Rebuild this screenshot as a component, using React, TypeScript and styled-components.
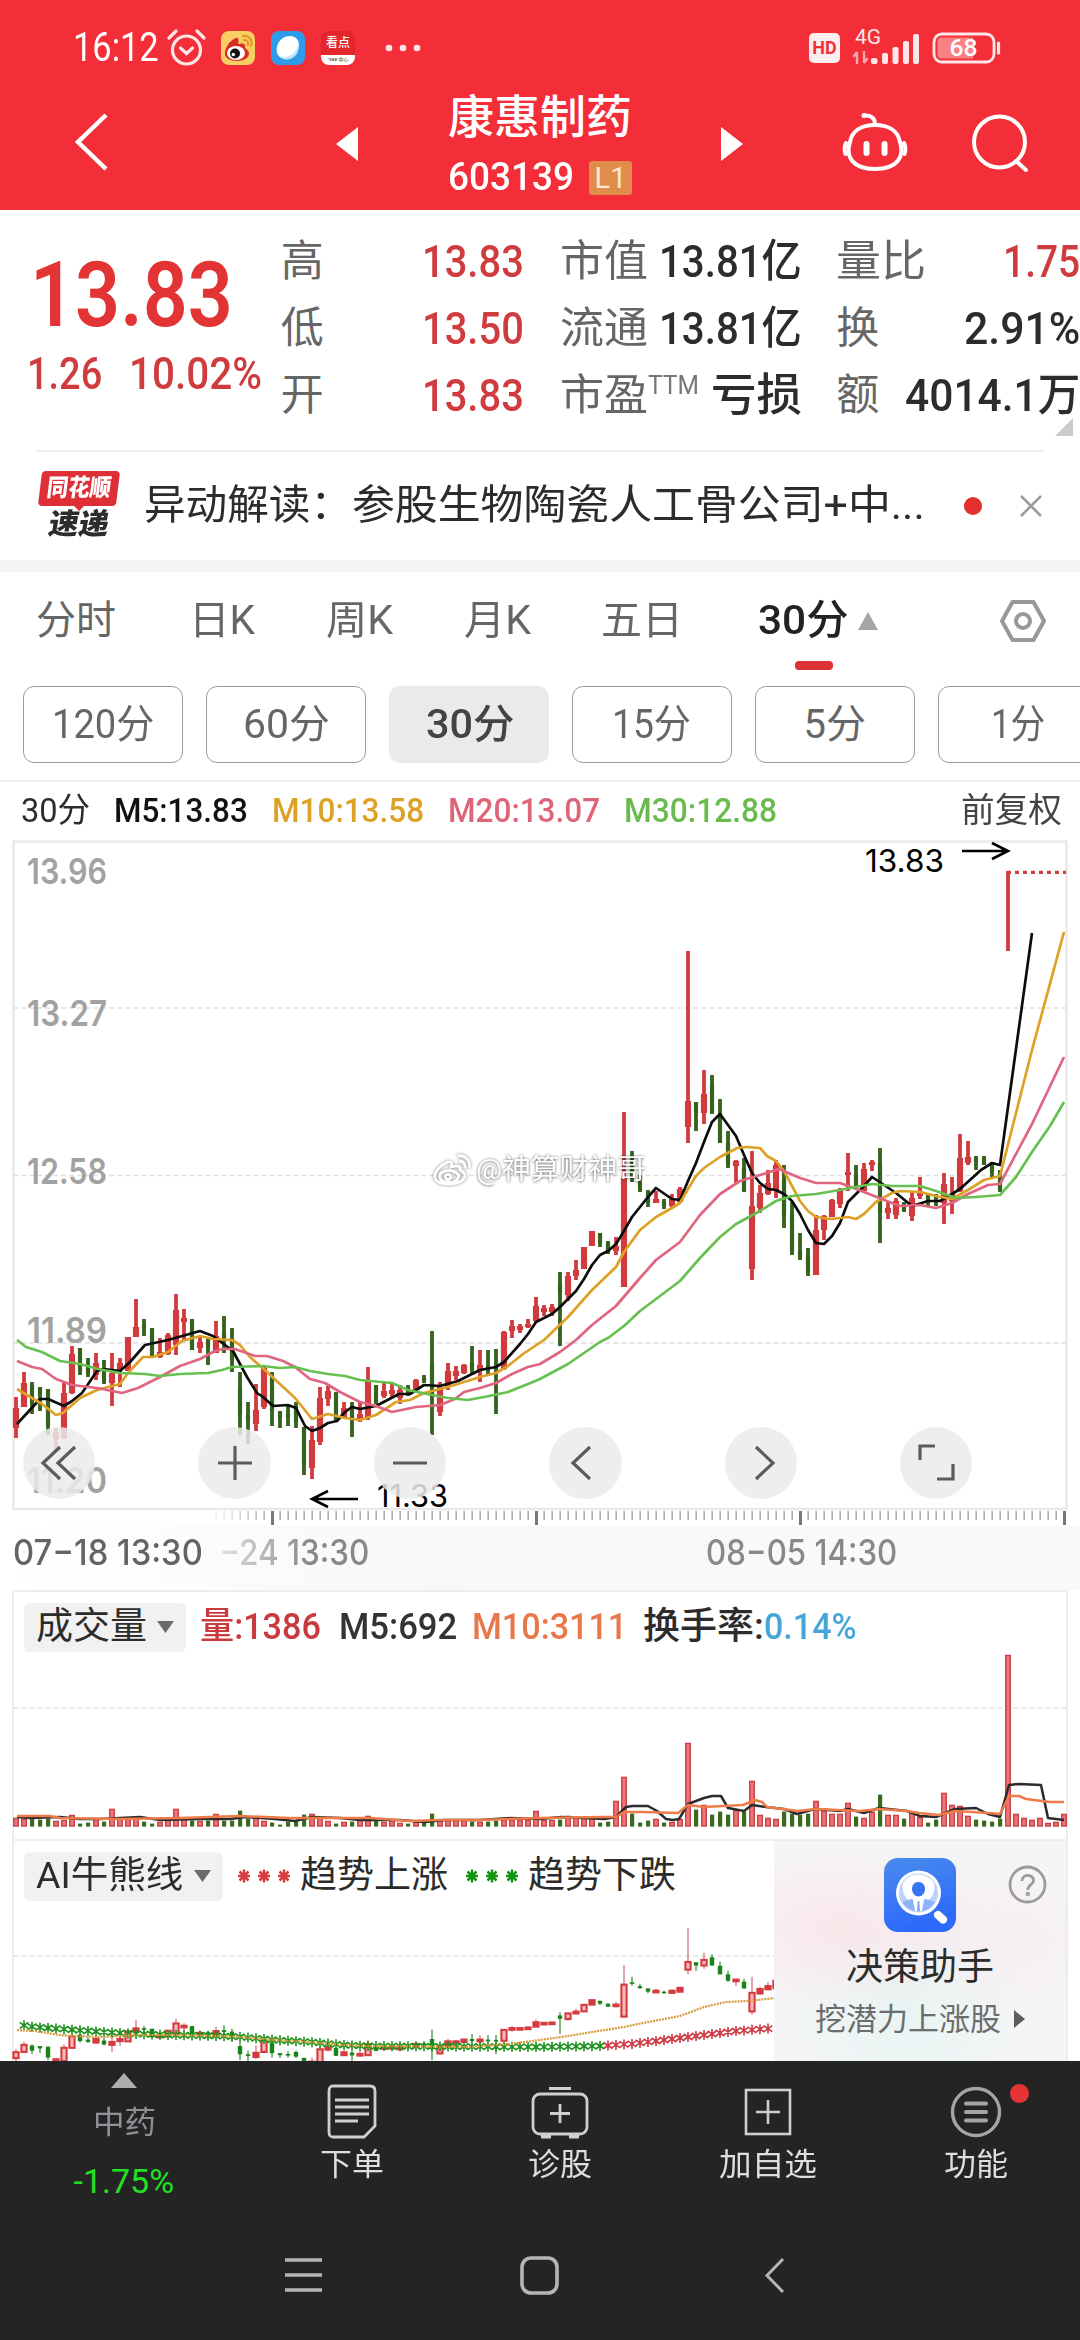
import React, { useLayoutEffect, useRef, useState } from 'react';
import styled, { createGlobalStyle, css } from 'styled-components';

const Global = createGlobalStyle`
  * { box-sizing: border-box; }
  html, body { margin: 0; padding: 0; background: #fff; }
  body { font-family: Roboto, "Noto Sans CJK SC", sans-serif; line-height: 1; overflow: hidden; }
  svg { display: block; flex: none; overflow: visible; }
`;

const INK = '#2c2c2c';

/* ---------- fitted text ---------- */

const FitBox = styled.span<{ $w: number; $size: number; $color?: string; $weight?: number; $gap?: number; $face?: string }>`
  display: block;
  flex: none;
  width: ${p => p.$w}px;
  margin-left: ${p => p.$gap ?? 0}px;
  font-size: ${p => p.$size}px;
  line-height: 1.15;
  color: ${p => p.$color ?? 'inherit'};
  font-weight: ${p => p.$weight ?? 400};
  ${p => p.$face && css`font-family: ${p.$face}, "Noto Sans CJK SC", sans-serif;`}
  white-space: pre;
`;
const FitInner = styled.span`
  display: inline-block;
  transform-origin: 0 50%;
`;

type FitProps = { w: number; size: number; color?: string; weight?: number; gap?: number; face?: string; children: React.ReactNode };

function Fit({ w, size, color, weight, gap, face, children }: FitProps) {
  const ref = useRef<HTMLSpanElement>(null);
  const [k, setK] = useState(1);
  useLayoutEffect(() => {
    if (ref.current) setK(w / ref.current.offsetWidth);
  }, [w, size]);
  return (
    <FitBox $w={w} $size={size} $color={color} $weight={weight} $gap={gap} $face={face}>
      <FitInner ref={ref} style={{ transform: `scaleX(${k})` }}>{children}</FitInner>
    </FitBox>
  );
}

/* ---------- page ---------- */

const Page = styled.div`
  width: 1080px;
  height: 2340px;
  overflow: hidden;
  display: flex;
  flex-direction: column;
  background: #fff;
  color: ${INK};
`;
const Header = styled.header`
  height: 210px;
  flex: none;
  background: #f32e38;
  color: #fff;
  display: flex;
  flex-direction: column;
`;
const StatusBar = styled.div`
  height: 96px;
  padding: 0 78px 0 73px;
  display: flex;
  align-items: center;
`;
const Gap = styled.i<{ $w: number }>`width: ${p => p.$w}px; flex: none;`;
const Grow = styled.i`flex: 1;`;
const AppTile = styled.div<{ $bg: string }>`
  width: 34px;
  height: 34px;
  border-radius: 8px;
  overflow: hidden;
  background: ${p => p.$bg};
  display: flex;
  flex-direction: column;
  align-items: center;
  justify-content: center;
`;
const TileText = styled.span`
  font-size: 12px;
  line-height: 24px;
  font-weight: 500;
  color: #fff;
`;
const TileFoot = styled.span`
  width: 34px;
  height: 10px;
  background: #fff;
  color: #444;
  font-size: 5px;
  line-height: 9px;
  text-align: center;
`;
const HdBadge = styled.div`
  width: 31px;
  height: 30px;
  border-radius: 5px;
  background: #fdeef0;
  color: #f32e38;
  font-size: 18px;
  font-weight: 700;
  line-height: 30px;
  text-align: center;
`;
const TitleBar = styled.div`
  height: 114px;
  padding: 0 50px 0 75px;
  display: flex;
  align-items: flex-start;
`;
const Slot = styled.div<{ $top: number; $ml: number }>`
  padding-top: ${p => p.$top}px;
  margin-left: ${p => p.$ml}px;
`;
const TitleStack = styled.div`
  width: 184px;
  margin-left: 90px;
  margin-top: -5px;
`;
const CodeRow = styled.div`
  margin-top: 17px;
  height: 34px;
  display: flex;
  align-items: center;
  justify-content: space-between;
`;
const LevelBadge = styled.div`
  width: 43px;
  height: 34px;
  border-radius: 3px;
  background: #e18d4a;
  color: #fce9cf;
  font-size: 29px;
  line-height: 35px;
  text-align: center;
`;

/* ---------- quote ---------- */

const Quote = styled.section`
  height: 240px;
  flex: none;
  padding-top: 18px;
  display: flex;
`;
const PriceBlock = styled.div`
  width: 281px;
  padding: 15px 0 0 30px;
`;
const ChangeRow = styled.div`
  display: flex;
  margin: 0 0 0 -3px;
`;
const Column = styled.div<{ $w: number; $ml: number }>`
  width: ${p => p.$w}px;
  margin-left: ${p => p.$ml}px;
`;
const Cell = styled.div`
  height: 67px;
  display: flex;
  align-items: center;
  justify-content: space-between;
`;
const LabelPair = styled.div`display: flex;`;
const Corner = styled.div`
  height: 14px;
  display: flex;
  justify-content: flex-end;
  padding-right: 7px;
  margin-top: -11px;
`;
const Rule = styled.div`
  height: 2px;
  flex: none;
  margin: 0 36px;
  background: #efefef;
`;
const News = styled.section`
  height: 108px;
  flex: none;
  padding: 0 37px;
  display: flex;
  align-items: center;
`;
const Logo = styled.div`
  width: 84px;
  margin-right: 24px;
  display: flex;
  flex-direction: column;
  align-items: center;
`;
const LogoTop = styled.div`
  width: 78px;
  height: 35px;
  background: #dd2f35;
  border-radius: 4px;
  transform: skewX(-7deg);
  display: flex;
  align-items: center;
  justify-content: center;
  color: #fff;
`;
const LogoTip = styled.div`
  width: 0;
  border: 5px solid transparent;
  border-top-color: #dd2f35;
  border-bottom: 0;
`;
const LogoBottom = styled.div`
  transform: skewX(-10deg);
  margin-top: -3px;
`;
const RedDot = styled.i<{ $ml: number }>`
  width: 18px;
  height: 18px;
  border-radius: 50%;
  margin-left: ${p => p.$ml}px;
  background: #e53030;
`;
const Band = styled.div`height: 12px; flex: none; background: #f5f5f5;`;

/* ---------- tabs ---------- */

const Tabs = styled.nav`
  height: 98px;
  flex: none;
  padding-left: 36px;
  display: flex;
  align-items: center;
  color: #666;
`;
const ActiveBar = styled.div`
  height: 17px;
  flex: none;
  padding-left: 795px;
  margin-top: -9px;
  &::before { content: ''; display: block; width: 38px; height: 9px; border-radius: 4px; background: #dd3235; }
`;
const Chips = styled.div`
  height: 77px;
  flex: none;
  margin-top: 8px;
  padding-left: 22.500px;
  display: flex;
  gap: 23px;
`;
const Chip = styled.button<{ $on?: boolean }>`
  width: 160px;
  height: 77px;
  flex: none;
  padding: 0;
  border: 1.500px solid ${p => (p.$on ? '#eaeaea' : '#9c9c9c')};
  border-radius: 11px;
  background: ${p => (p.$on ? '#eaeaea' : '#fff')};
  color: ${p => (p.$on ? '#444' : '#666')};
  font-family: inherit;
  display: flex;
  align-items: center;
  justify-content: center;
`;
const Legend = styled.div`
  height: 60px;
  flex: none;
  margin-top: 17px;
  border-top: 2px solid #ececec;
  padding-left: 21px;
  display: flex;
  align-items: center;
`;

/* ---------- charts ---------- */

const ChartWrap = styled.section`
  position: relative;
  height: 686px;
  flex: none;
`;
const Controls = styled.div`
  position: absolute;
  left: 23px;
  top: 587px;
  display: flex;
  gap: 103px;
`;
const RoundButton = styled.button`
  width: 72.4px;
  height: 72.4px;
  border: 0;
  padding: 0;
  border-radius: 50%;
  background: rgba(235, 235, 235, 0.85);
  display: flex;
  align-items: center;
  justify-content: center;
`;
const Watermark = styled.div`
  position: absolute;
  left: 432px;
  top: 313px;
  display: flex;
  align-items: center;
  color: #fff;
  text-shadow: 0 0 3px rgba(0, 0, 0, 0.45), 0 1px 3px rgba(0, 0, 0, 0.3);
`;
const Dates = styled.div`
  height: 64px;
  flex: none;
  padding: 0 0 12px 13px;
  background: linear-gradient(90deg, #fff 0, #f8f8f8 40%, #fafafa 100%);
  display: flex;
  align-items: center;
`;
const Faded = styled.div`
  margin-left: 16px;
  mask-image: linear-gradient(90deg, rgba(0,0,0,.2), #000 60%);
`;
const Panel = styled.section<{ $h: number }>`
  height: ${p => p.$h}px;
  flex: none;
  margin: 0 12px;
  border: 2px solid #ededed;
  border-bottom: 0;
  display: flex;
`;
const PanelMain = styled.div`flex: none; width: 1051px; margin-left: -14px;`;
const AiMain = styled.div`flex: none; width: 774px; margin-left: -14px; overflow: hidden;`;
const PanelHead = styled.div`
  height: 70px;
  padding: 0 0 0 24px;
  display: flex;
  align-items: center;
`;
const Picker = styled.div<{ $w: number }>`
  width: ${p => p.$w}px;
  height: 49px;
  flex: none;
  border-radius: 6px;
  background: #f1f1f1;
  padding: 0 12px;
  display: flex;
  align-items: center;
  justify-content: space-between;
`;
const AiCard = styled.aside`
  flex: 1;
  background:
    radial-gradient(ellipse at 22% 40%, rgba(252, 226, 230, .75), transparent 45%),
    radial-gradient(ellipse at 75% 45%, rgba(250, 232, 236, .5), transparent 50%),
    radial-gradient(ellipse at 45% 75%, rgba(228, 244, 242, .8), transparent 55%),
    #f5f5f7;
  display: grid;
  grid-template-columns: 1fr 74px 1fr;
  justify-items: center;
  align-content: start;
`;
const CardIcon = styled.div`grid-column: 2; padding-top: 16px;`;
const CardHelp = styled.div`grid-column: 3; padding: 24px 0 0 32px;`;
const CardTitle = styled.div`grid-column: 1 / -1; margin-top: 14px;`;
const CardLink = styled.div`
  grid-column: 1 / -1;
  margin-top: 12px;
  display: flex;
  align-items: center;
`;

/* ---------- bottom ---------- */

const Bottom = styled.footer`
  height: 279px;
  flex: none;
  background: #242424;
  color: #dedede;
`;
const Actions = styled.div`
  height: 150px;
  display: flex;
`;
const Action = styled.div<{ $ml: number; $w: number }>`
  width: ${p => p.$w}px;
  margin-left: ${p => p.$ml}px;
  position: relative;
  display: flex;
  flex-direction: column;
  align-items: center;
`;
const IconSlot = styled.div`
  height: 82px;
  margin-bottom: 4px;
  padding-top: 20px;
  display: flex;
  align-items: center;
`;
const Badge = styled.i`
  position: absolute;
  right: -1px;
  top: 23px;
  width: 19px;
  height: 19px;
  border-radius: 50%;
  background: #e63333;
`;
const Industry = styled.div`
  width: 110px;
  margin-left: 69px;
  padding-top: 12px;
  display: flex;
  flex-direction: column;
  align-items: center;
`;
const IndustryLine = styled.div<{ $mt: number }>`margin-top: ${p => p.$mt}px;`;
const SystemNav = styled.div`
  height: 128px;
  padding-left: 285px;
  display: flex;
  align-items: center;
`;

/* ---------- data ---------- */

// direction, then high, body top, body bottom, low
const CANDLES = `
r1397,1408,1428,1438 r1372,1383,1407,1407 g1382,1385,1403,1414 g1387,1387,1395,1411 g1389,1389,1426,1435 r1428,1432,1439,1450
r1382,1393,1438,1439 r1346,1354,1393,1394 g1348,1348,1370,1375 g1358,1365,1373,1377 r1353,1363,1375,1380 g1360,1368,1382,1384
r1353,1373,1383,1406 r1358,1363,1370,1387 r1337,1337,1371,1371 r1299,1327,1337,1337 g1319,1326,1328,1336 g1328,1328,1357,1357
r1338,1352,1357,1358 r1333,1335,1354,1355 r1294,1310,1345,1355 r1309,1318,1322,1340 g1319,1319,1350,1350 r1337,1342,1348,1353
g1338,1340,1347,1365 r1321,1336,1353,1353 g1316,1333,1339,1353 g1328,1338,1360,1372 g1372,1387,1415,1435 g1402,1415,1421,1444
r1384,1410,1424,1431 r1365,1368,1407,1409 g1372,1375,1411,1426 g1411,1411,1418,1428 g1405,1414,1417,1426 g1402,1407,1423,1428
g1427,1427,1465,1475 r1426,1440,1468,1479 r1387,1398,1442,1445 r1386,1391,1399,1406 g1392,1393,1420,1422 r1402,1408,1418,1418
g1402,1409,1419,1437 r1402,1414,1419,1422 r1367,1381,1418,1420 g1385,1385,1404,1404 r1382,1391,1396,1398 r1382,1390,1394,1398
r1385,1390,1398,1404 g1385,1387,1393,1396 r1379,1380,1390,1390 g1375,1378,1380,1383 g1331,1363,1397,1435 r1382,1387,1412,1416
r1363,1371,1387,1390 r1366,1371,1376,1380 r1364,1365,1373,1374 g1346,1363,1370,1375 r1350,1365,1371,1382 g1350,1365,1368,1375
g1349,1366,1371,1414 r1331,1332,1369,1370 r1320,1326,1331,1338 r1324,1326,1330,1333 r1319,1324,1327,1328 r1297,1306,1321,1322
r1305,1308,1312,1316 r1304,1307,1312,1316 g1272,1283,1294,1346 r1272,1276,1295,1301 r1260,1270,1276,1280 r1247,1247,1269,1269
r1231,1231,1246,1246 g1233,1233,1243,1247 g1241,1243,1253,1254 r1237,1246,1251,1255 r1112,1178,1287,1287 g1151,1170,1175,1182
g1175,1183,1190,1192 g1190,1191,1202,1207 r1191,1199,1203,1203 g1199,1202,1206,1209 r1194,1199,1206,1208 r1187,1189,1202,1203
r951,1101,1127,1143 g1102,1102,1113,1131 r1070,1094,1113,1124 g1075,1085,1113,1114 g1099,1114,1143,1143 g1131,1143,1165,1168
r1160,1161,1166,1183 g1158,1168,1191,1192 r1151,1206,1269,1280 r1185,1193,1208,1213 r1170,1183,1194,1195 r1160,1165,1190,1198
g1165,1180,1216,1228 g1202,1213,1252,1255 g1233,1251,1258,1260 g1248,1255,1271,1276 r1215,1230,1275,1275 r1215,1216,1230,1240
r1199,1200,1217,1217 r1188,1190,1204,1208 r1153,1172,1175,1191 g1165,1175,1188,1189 r1163,1169,1191,1191 r1160,1162,1165,1171
g1148,1163,1213,1243 r1201,1208,1213,1219 r1198,1201,1215,1219 g1202,1203,1211,1212 r1191,1198,1216,1221 r1177,1191,1196,1199
g1194,1195,1201,1207 g1194,1195,1202,1206 r1173,1184,1203,1224 r1177,1194,1201,1214 r1134,1158,1191,1192 r1141,1157,1163,1165
g1156,1158,1162,1170 g1156,1157,1165,1165 g1162,1164,1172,1178 g1170,1174,1190,1192 r871,951,951,951`
  .trim().split(/\s+/)
  .map((s, i) => ({ up: s[0] === 'r', x: 16 + i * 8, v: s.slice(1).split(',').map(Number) }));

const VOLUME = [8,7,8,7,8,5,6,11,3,4,7,5,17,8,7,8,5,3,4,6,17,8,6,5,6,12,6,6,16,8,8,5,4,2,5,5,12,12,8,5,3,4,5,7,10,7,4,6,3,3,4,5,13,6,6,6,6,5,4,5,6,6,6,6,6,15,
  6,6,7,10,8,8,8,4,5,25,49,13,4,6,7,4,4,7,83,17,21,12,15,12,16,15,45,11,8,7,15,13,12,13,25,15,12,12,23,10,8,14,32,11,11,8,14,9,4,7,33,21,20,10,7,6,5,8,171,12,8,6,8,3,4,12];

const MA5 = '17,1424 40,1399 48,1399 64,1406 72,1401 82,1393 97,1371 104,1369 120,1371 130,1362 145,1345 168,1340 200,1331 213,1336 233,1351 247,1377 257,1393 263,1397 273,1406 288,1405 296,1408 305,1426 312,1431 320,1428 328,1423 337,1421 345,1412 352,1407 360,1409 376,1406 399,1394 410,1394 424,1385 440,1386 458,1381 480,1370 496,1367 504,1362 520,1344 528,1334 536,1322 552,1314 560,1307 568,1299 576,1291 584,1279 592,1265 600,1255 608,1251 616,1244 624,1231 632,1217 648,1197 656,1188 672,1199 680,1200 688,1181 696,1163 704,1142 712,1122 720,1114 728,1125 736,1136 744,1155 752,1173 760,1183 768,1189 776,1190 784,1194 792,1201 800,1214 808,1230 816,1243 824,1244 832,1236 840,1223 848,1202 856,1194 864,1186 872,1177 884,1185 896,1193 912,1206 928,1201 940,1201 952,1194 960,1189 981,1170 992,1163 1000,1165 1032,933';
const MA10 = '17,1389 32,1398 42,1404 56,1415 63,1413 80,1398 97,1390 112,1386 120,1384 128,1373 143,1357 153,1357 168,1352 182,1341 200,1336 213,1339 232,1340 240,1345 250,1357 267,1372 295,1398 304,1409 312,1419 328,1414 345,1418 360,1420 376,1415 396,1402 410,1400 424,1393 448,1387 480,1377 496,1373 508,1366 523,1354 544,1340 568,1317 592,1290 616,1267 624,1252 640,1230 656,1217 672,1208 680,1203 688,1189 696,1176 704,1168 720,1157 737,1148 747,1147 760,1148 767,1156 776,1161 784,1171 792,1186 800,1201 808,1211 816,1217 832,1219 848,1217 856,1219 864,1214 876,1202 892,1193 900,1191 920,1192 936,1196 952,1199 968,1190 984,1180 1000,1176 1032,1050 1064,932';
const MA20 = '17,1361 32,1367 42,1369 56,1379 72,1385 97,1388 122,1393 138,1388 160,1377 180,1366 200,1359 215,1351 223,1349 235,1349 255,1356 267,1356 283,1361 295,1367 310,1379 325,1383 340,1392 360,1402 376,1406 392,1412 416,1407 440,1405 455,1399 464,1392 480,1388 496,1383 512,1374 528,1367 540,1364 560,1352 576,1340 592,1325 616,1306 640,1278 656,1260 680,1242 700,1215 720,1194 740,1181 760,1175 779,1169 800,1178 816,1183 840,1183 848,1186 864,1192 892,1203 900,1206 920,1205 936,1208 952,1203 968,1194 988,1185 1000,1184 1032,1124 1064,1057';
const MA30 = '17,1340 26,1347 42,1352 60,1361 80,1364 98,1369 120,1373 145,1374 160,1376 180,1374 208,1373 222,1370 232,1367 263,1366 280,1368 295,1367 310,1371 328,1374 345,1376 360,1380 392,1383 408,1390 432,1395 448,1398 468,1400 489,1396 508,1392 528,1384 540,1379 568,1364 584,1353 600,1342 608,1338 624,1326 640,1311 680,1281 700,1258 720,1237 736,1224 760,1211 776,1201 792,1196 816,1194 840,1190 856,1187 872,1184 892,1186 920,1186 936,1191 956,1198 976,1197 1000,1195 1016,1177 1032,1152 1050,1126 1064,1102';

const VMA5 = '17,1817 30,1818 60,1817 80,1819 100,1819 140,1817 160,1820 200,1819 230,1819 245,1817 275,1819 295,1821 312,1817 340,1818 360,1820 400,1820 425,1822 445,1820 480,1820 510,1818 540,1819 561,1817 605,1819 616,1817 626,1807 632,1806 648,1806 657,1811 666,1819 673,1820 679,1819 688,1804 704,1798 712,1796 721,1796 728,1808 744,1811 752,1805 766,1807 784,1809 797,1814 815,1809 840,1811 848,1809 864,1813 879,1808 907,1811 920,1816 936,1817 955,1809 976,1808 988,1814 1000,1817 1009,1785 1019,1784 1041,1785 1048,1818 1064,1820';
const VMA10 = '17,1816 50,1816 60,1818 120,1819 180,1818 240,1816 290,1818 330,1818 370,1818 410,1821 440,1820 480,1820 540,1818 602,1817 616,1817 624,1812 643,1812 678,1813 688,1805 704,1807 743,1805 755,1800 762,1802 767,1807 798,1811 816,1809 860,1811 879,1809 907,1811 919,1813 939,1815 955,1811 988,1813 1000,1814 1009,1796 1019,1796 1026,1799 1050,1802 1064,1802';

const parse = (s: string) => s.split(' ').map(p => p.split(',').map(Number));
const TREND = parse('22,2025 34,2027 62,2029 103,2032 138,2034 172,2035 220,2036 241,2037 275,2040 310,2042 344,2045 365,2046 540,2047 600,2046 631,2044 664,2040 704,2035 736,2031 776,2028');
const AI_AVG = '17,2030 34,2031 60,2035 72,2036 100,2037 138,2035 172,2035 220,2036 241,2037 275,2040 310,2042 344,2045 365,2046 470,2047 510,2044 540,2040 568,2036 592,2032 624,2027 643,2023 680,2016 704,2007 726,2002 747,2001 776,1998';

function at(line: number[][], x: number) {
  for (let i = 1; i < line.length; i++) {
    const [x0, y0] = line[i - 1];
    const [x1, y1] = line[i];
    if (x <= x1) return y0 + ((y1 - y0) * (x - x0)) / (x1 - x0);
  }
  return line[line.length - 1][1];
}
const aiY = (y: number) => Math.max(1928, 2049 + 0.294 * (y - 1397));

const C_UP = '#d13b3d';
const C_DOWN = '#35621f';

/* ---------- drawings ---------- */

function PriceChart() {
  const ticks = Array.from({ length: 107 }, (_, i) => 216 + i * 8);
  const labels: [string, number][] = [['13.96', 884], ['13.27', 1026], ['12.58', 1184], ['11.89', 1343], ['11.20', 1493]];
  return (
    <svg width="1080" height="686" viewBox="0 840 1080 686">
      <path d="M13.5 1509V841.5H1066.5V1509Z" fill="none" stroke="#e9e9e9" strokeWidth="2.5" />
      {[1008, 1175.5, 1343].map(y => (
        <path key={y} d={`M13 ${y}H1066`} stroke="#e0e0e0" strokeWidth="1.4" strokeDasharray="5 3" />
      ))}
      <g fontFamily="Inter, sans-serif" fontSize="36" fontWeight="600" fill="#a2a2a2">
        {labels.map(([t, y]) => (
          <text key={t} x="27" y={y} textLength="80" lengthAdjust="spacingAndGlyphs">{t}</text>
        ))}
      </g>
      {CANDLES.map(({ up, x, v: [h, t, b, l] }) => (
        <g key={x} fill={up ? C_UP : C_DOWN}>
          <rect x={x - 1.9} y={h} width="3.8" height={Math.max(l - h, 2)} />
          <rect x={up ? x - 3.1 : x - 2.1} y={t} width={up ? 6.2 : 4.2} height={Math.max(b - t, h === 871 ? 0 : 3)} />
        </g>
      ))}
      <path d="M1007 872.3H1066" stroke="#cf3f3f" strokeWidth="3.2" strokeDasharray="4 4" />
      <g fill="none" strokeWidth="2.7" strokeLinejoin="round">
        <polyline points={MA5} stroke="#0c0c0c" />
        <polyline points={MA10} stroke="#dda125" />
        <polyline points={MA20} stroke="#df6580" />
        <polyline points={MA30} stroke="#68c050" />
      </g>
      <g fontFamily="Inter, sans-serif" fontSize="31" fill="#000">
        <text x="865" y="872" textLength="79" lengthAdjust="spacingAndGlyphs">13.83</text>
        <text x="377" y="1507" textLength="71" lengthAdjust="spacingAndGlyphs">11.33</text>
      </g>
      <path d="M962 851H1008M992 843L1008 851L992 859" fill="none" stroke="#000" strokeWidth="2.6" />
      <path d="M358 1499H312M328 1491L312 1499L328 1507" fill="none" stroke="#000" strokeWidth="2.6" />
      {ticks.map((x, i) => {
        const major = (x - 272) % 264 === 0;
        return (
          <rect key={x} x={major ? x - 1 : x - 0.5} y="1511" width={major ? 3 : 1.3} height={major ? 14 : 9}
            fill={major ? '#777' : '#9a9a9a'} opacity={Math.min(1, 0.15 + i * 0.12)} />
        );
      })}
    </svg>
  );
}

function VolumeChart() {
  return (
    <svg width="1066" height="177" viewBox="0 1662 1066 177">
      <path d="M13 1708H1066" stroke="#e3e3e3" strokeWidth="1.6" strokeDasharray="5 3" />
      {VOLUME.map((h, i) => {
        const up = i > 123 || CANDLES[i].up;
        const x = 16 + i * 8;
        return up
          ? <rect key={i} x={x - 2.3} y={1826.4 - h} width="4.6" height={h - 0.4} fill="#ec7476" stroke="#cd4246" strokeWidth="1.4" />
          : <rect key={i} x={x - 2} y={1826.6 - h} width="4.2" height={h} fill="#3b6a1f" />;
      })}
      <g fill="none" strokeWidth="2.5" strokeLinejoin="round">
        <polyline points={VMA5} stroke="#2b2b2b" />
        <polyline points={VMA10} stroke="#ee7b48" />
      </g>
    </svg>
  );
}

function AiChart() {
  const xs = Array.from({ length: 94 }, (_, i) => 24 + i * 8);
  return (
    <svg width="774" height="152" viewBox="0 1911 774 152">
      <path d="M13 1956H774" stroke="#e3e3e3" strokeWidth="1.6" strokeDasharray="5 3" />
      {CANDLES.slice(0, 96).map(({ up, x, v: [h, t, b, l] }) => {
        const top = aiY(t);
        const height = Math.max(aiY(b) - top, 1.6);
        return up ? (
          <g key={x}>
            <path d={`M${x} ${aiY(h)}V${aiY(l)}`} stroke="#d58088" strokeWidth="1.4" />
            <rect x={x - 2.6} y={top} width="5.2" height={height} fill={height > 5 ? '#f6bcbc' : '#d43b3f'} stroke="#d43b3f" strokeWidth="2.1" />
          </g>
        ) : (
          <g key={x}>
            <path d={`M${x} ${aiY(h)}V${aiY(l)}`} stroke="#4f9a4d" strokeWidth="1.4" />
            <rect x={x - 2.2} y={top} width="4.4" height={height} fill="#188418" />
          </g>
        );
      })}
      {xs.map(x => {
        const y = at(TREND, x);
        return (
          <path key={x} d={`M${x} ${y - 5}V${y + 5}M${x - 4.3} ${y - 3}L${x + 4.3} ${y + 3}M${x - 4.3} ${y + 3}L${x + 4.3} ${y - 3}`}
            stroke={x > 603 ? '#cf3a45' : '#1c921c'} strokeWidth="1.6" />
        );
      })}
      <polyline points={AI_AVG} fill="none" stroke="#d99a3c" strokeWidth="2.2" strokeDasharray="2 1" />
    </svg>
  );
}

const Alarm = () => (
  <svg width="39" height="38" viewBox="0 0 39 38" fill="none" stroke="#fde6e8" strokeWidth="3.2" strokeLinecap="round">
    <circle cx="19.5" cy="21" r="14" />
    <path d="M2 9L9 2M37 9L30 2M13.5 19L19.5 24.5L25.5 19" />
  </svg>
);
const Weibo = () => (
  <svg width="34" height="34" viewBox="0 0 34 34">
    <path d="M15 7C8 10 3 18 4 24C6 32 27 32 28 23C28 19 25 18 24 17C25 12 21 12 17 13C18 10 18 6 15 7Z" fill="#d92c23" />
    <ellipse cx="15" cy="22" rx="9" ry="7" fill="#fff" />
    <circle cx="14" cy="22.5" r="5" fill="#111" />
    <circle cx="12.3" cy="23.5" r="1.7" fill="#fff" />
    <path d="M22 5C28 4 32 9 30 15M23 9C26 9 28 11 27 14" fill="none" stroke="#e79421" strokeWidth="2.2" strokeLinecap="round" />
  </svg>
);
const Bubble = () => (
  <svg width="34" height="34" viewBox="0 0 34 34">
    <path d="M20 5C28 6 30 14 26 21C22 29 11 30 7 24C3 16 9 4 20 5Z" fill="#fff" />
    <path d="M27 11C28 19 20 28 9 26C17 33 31 25 27 11Z" fill="#bfe6fb" />
  </svg>
);
const Signal = () => (
  <svg width="68" height="46" viewBox="0 -4 68 46">
    <text x="3" y="15" fontFamily="Roboto, sans-serif" fontSize="20" fill="#fde6e8" textLength="26" lengthAdjust="spacingAndGlyphs">4G</text>
    <path d="M5 35V23M1.5 28L5 23M12 22V34M12 34L15.5 29" stroke="#f9a7ac" strokeWidth="2.4" fill="none" />
    <g fill="#fde6e8">
      <rect x="19" y="29" width="6.5" height="6" rx="2" /><rect x="30" y="24" width="6" height="11" rx="2" />
      <rect x="40.5" y="18" width="6" height="17" rx="2" /><rect x="51" y="12" width="6" height="23" rx="2" />
      <rect x="61" y="5" width="6" height="30" rx="2" />
    </g>
  </svg>
);
const Battery = () => (
  <svg width="70" height="32" viewBox="0 0 70 32">
    <rect x="2" y="2" width="60" height="28" rx="8" fill="none" stroke="#fde6e8" strokeWidth="2.8" />
    <path d="M10 5.5H41V26.5H10Q5.5 26.5 5.5 22V10Q5.5 5.5 10 5.5Z" fill="#f98085" />
    <path d="M66.5 11V21" stroke="#fde6e8" strokeWidth="3.2" strokeLinecap="round" />
    <text x="17.5" y="24" fontFamily="Roboto, sans-serif" fontSize="23" fontWeight="500" fill="#fff" textLength="28" lengthAdjust="spacingAndGlyphs">68</text>
  </svg>
);
const Robot = () => (
  <svg width="66" height="62" viewBox="0 0 66 62" fill="none" stroke="#fff" strokeWidth="4" strokeLinecap="round">
    <path d="M33 14C47 14 56 20 58 31C63 46 55 58 33 58C11 58 3 46 8 31C10 20 19 14 33 14Z" />
    <path d="M22 4.500C29 4 33 7 33 13" />
    <circle cx="22" cy="4.500" r="2.500" fill="#fff" stroke="none" />
    <path d="M4 32Q1.500 37 3.500 43M62 32Q64.500 37 62.500 43" />
    <path d="M24.500 33V42M42.500 33V42" strokeWidth="6" />
  </svg>
);
const Search = () => (
  <svg width="58" height="60" viewBox="0 0 58 60" fill="none" stroke="#fff" strokeWidth="4" strokeLinecap="round">
    <circle cx="27.500" cy="29" r="25.500" /><path d="M44 48L54 57" />
  </svg>
);
const Tri = ({ w, h, d, fill }: { w: number; h: number; d: string; fill: string }) => (
  <svg width={w} height={h} viewBox="0 0 10 10" preserveAspectRatio="none"><path d={d} fill={fill} /></svg>
);
const UP = 'M5 0L10 10H0Z';
const DOWN = 'M0 0H10L5 10Z';
const RIGHT = 'M0 0L10 5L0 10Z';
const LEFT = 'M10 0L0 5L10 10Z';

const Stars = ({ color }: { color: string }) => (
  <svg width="56" height="14" viewBox="0 0 56 14" stroke={color} strokeWidth="2.5">
    {[7, 27, 47].map(x => <path key={x} d={`M${x} 0.5V13.5M${x - 6} 7H${x + 6}M${x - 4.5} 2.5L${x + 4.5} 11.5M${x - 4.5} 11.5L${x + 4.5} 2.5`} />)}
  </svg>
);

const AssistantIcon = () => (
  <svg width="74" height="76" viewBox="0 0 74 76">
    <defs>
      <linearGradient id="blue" x1="0" y1="0" x2="0.3" y2="1"><stop offset="0" stopColor="#4a8bed" /><stop offset="1" stopColor="#2d69fb" /></linearGradient>
      <clipPath id="lens"><circle cx="35.5" cy="36" r="18.5" /></clipPath>
    </defs>
    <rect x="1" y="1" width="72" height="74" rx="14" fill="url(#blue)" />
    <path d="M55 58L60 62.5" stroke="#fff" strokeWidth="8" strokeLinecap="round" />
    <circle cx="35.5" cy="36" r="22.5" fill="#fff" />
    <circle cx="35.5" cy="36" r="19.5" fill="#bcd2fb" />
    <g clipPath="url(#lens)">
      <ellipse cx="35.5" cy="30" rx="16" ry="17" fill="#fff" />
      <path d="M15 58V49Q20 43 30 42L35.5 58L41 42Q51 43 56 49V58Z" fill="#8db2f8" />
      <path d="M29.5 41L33 58H38L41.5 41Z" fill="#fff" />
      <path d="M34.7 44H36.3L37.3 58H33.7Z" fill="#7da6f6" />
    </g>
    <path d="M35.5 25C40 25 42 28.500 42 32C42 36 39 39.500 35.500 39.500C32 39.500 29 36 29 32C29 28.500 31 25 35.500 25Z" fill="#3876f0" />
  </svg>
);

const ctl = { width: 40, height: 40, viewBox: '0 0 40 40', fill: 'none', stroke: '#5c5c5c', strokeWidth: 3.2 } as const;

export default function App() {
  return (
    <Page>
      <Global />
      <Header>
        <StatusBar>
          <Fit w={86} size={40}>16:12</Fit>
          <Gap $w={8} /><Alarm />
          <Gap $w={15} /><AppTile $bg="#f8cf62"><Weibo /></AppTile>
          <Gap $w={16} /><AppTile $bg="#2b9bea"><Bubble /></AppTile>
          <Gap $w={16} /><AppTile $bg="#e3262c"><TileText>看点</TileText><TileFoot>•see·中心</TileFoot></AppTile>
          <Gap $w={30} />
          <svg width="36" height="8" viewBox="0 0 36 8" fill="#fde6e8"><circle cx="4" cy="4" r="3.3" /><circle cx="18" cy="4" r="3.3" /><circle cx="32" cy="4" r="3.3" /></svg>
          <Grow />
          <HdBadge>HD</HdBadge>
          <Gap $w={12} /><Signal />
          <Gap $w={12} /><Battery />
        </StatusBar>
        <TitleBar>
          <Slot $top={16} $ml={0}>
            <svg width="34" height="60" viewBox="0 0 34 60" fill="none" stroke="#fff" strokeWidth="4.5"><path d="M31 3L3 30L31 57" /></svg>
          </Slot>
          <Slot $top={31} $ml={227}><Tri w={22} h={34} d={LEFT} fill="#fff" /></Slot>
          <TitleStack>
            <Fit w={184} size={46} weight={500}>康惠制药</Fit>
            <CodeRow><Fit w={126} size={39} weight={500}>603139</Fit><LevelBadge>L1</LevelBadge></CodeRow>
          </TitleStack>
          <Slot $top={31} $ml={89}><Tri w={22} h={34} d={RIGHT} fill="#fff" /></Slot>
          <Slot $top={15} $ml={99}><Robot /></Slot>
          <Slot $top={17} $ml={64}><Search /></Slot>
        </TitleBar>
      </Header>

      <Quote>
        <PriceBlock>
          <Fit w={203} size={91} weight={600} color="#e23434">13.83</Fit>
          <ChangeRow>
            <Fit w={75} size={45} weight={500} color="#d03c3e">1.26</Fit>
            <Fit w={133} size={45} weight={500} color="#d03c3e" gap={27}>10.02%</Fit>
          </ChangeRow>
        </PriceBlock>
        <Column $w={243} $ml={0}>
          {[['高', '13.83'], ['低', '13.50'], ['开', '13.83']].map(([l, v]) => (
            <Cell key={l}><Fit w={43} size={43} color="#666">{l}</Fit><Fit w={102} size={45} weight={500} color="#d03c3e">{v}</Fit></Cell>
          ))}
        </Column>
        <Column $w={243} $ml={36}>
          <Cell><Fit w={88} size={43} color="#666">市值</Fit><Fit w={143} size={45} weight={500}>13.81亿</Fit></Cell>
          <Cell><Fit w={88} size={43} color="#666">流通</Fit><Fit w={143} size={45} weight={500}>13.81亿</Fit></Cell>
          <Cell>
            <LabelPair><Fit w={88} size={43} color="#666">市盈</Fit><Fit w={51} size={26} color="#777">TTM</Fit></LabelPair>
            <Fit w={91} size={45} weight={500}>亏损</Fit>
          </Cell>
        </Column>
        <Column $w={244} $ml={34}>
          <Cell><Fit w={90} size={43} color="#666">量比</Fit><Fit w={77} size={45} weight={500} color="#d03c3e">1.75</Fit></Cell>
          <Cell><Fit w={43} size={43} color="#666">换</Fit><Fit w={116} size={45} weight={500}>2.91%</Fit></Cell>
          <Cell><Fit w={43} size={43} color="#666">额</Fit><Fit w={175} size={45} weight={500}>4014.1万</Fit></Cell>
          <Corner><Tri w={18} h={18} d="M10 0V10H0Z" fill="#cbcbcb" /></Corner>
        </Column>
      </Quote>
      <Rule />
      <News>
        <Logo>
          <LogoTop><Fit w={64} size={24} weight={900}>同花顺</Fit></LogoTop>
          <LogoTip />
          <LogoBottom><Fit w={60} size={29} weight={900}>速递</Fit></LogoBottom>
        </Logo>
        <Fit w={208} size={41}>异动解读：</Fit>
        <Fit w={573} size={41}>参股生物陶瓷人工骨公司+中...</Fit>
        <RedDot $ml={39} />
        <Gap $w={37} />
        <svg width="24" height="24" viewBox="0 0 24 24" stroke="#9c9c9c" strokeWidth="2.6"><path d="M2 2L22 22M22 2L2 22" /></svg>
      </News>
      <Band />

      <Tabs>
        <Fit w={80} size={40}>分时</Fit>
        <Fit w={66} size={40} gap={73}>日K</Fit>
        <Fit w={67} size={40} gap={71}>周K</Fit>
        <Fit w={67} size={40} gap={71}>月K</Fit>
        <Fit w={82} size={40} gap={70}>五日</Fit>
        <Fit w={91} size={41} weight={500} color="#222" gap={75}>30分</Fit>
        <Gap $w={9} /><Tri w={20} h={18} d={UP} fill="#a5a5a5" />
        <Gap $w={122} />
        <svg width="46" height="46" viewBox="0 0 46 46" fill="none" stroke="#989898" strokeWidth="4" strokeLinejoin="round">
          <path d="M12.500 4H33.500L44 23L33.500 42H12.500L2 23Z" /><circle cx="23" cy="23" r="7" />
        </svg>
      </Tabs>
      <ActiveBar />
      <Chips>
        <Chip><Fit w={102} size={40}>120分</Fit></Chip>
        <Chip><Fit w={87} size={40}>60分</Fit></Chip>
        <Chip $on><Fit w={88} size={40} weight={500}>30分</Fit></Chip>
        <Chip><Fit w={79} size={40}>15分</Fit></Chip>
        <Chip><Fit w={62} size={40}>5分</Fit></Chip>
        <Chip><Fit w={54} size={40}>1分</Fit></Chip>
      </Chips>
      <Legend>
        <Fit w={69} size={34}>30分</Fit>
        <Fit w={134} size={34} weight={500} color="#111" gap={24}>M5:13.83</Fit>
        <Fit w={152} size={34} weight={500} color="#dda125" gap={24}>M10:13.58</Fit>
        <Fit w={152} size={34} weight={500} color="#de6478" gap={24}>M20:13.07</Fit>
        <Fit w={153} size={34} weight={500} color="#68bb4c" gap={24}>M30:12.88</Fit>
        <Fit w={101} size={34} color="#444" gap={184}>前复权</Fit>
      </Legend>

      <ChartWrap>
        <PriceChart />
        <Watermark>
          <svg width="40" height="34" viewBox="0 0 40 34" fill="none" stroke="#fff" strokeWidth="2.8" filter="drop-shadow(0 0 1.5px rgba(0,0,0,.5))">
            <path d="M16 9C8 12 2 19 3 25C6 34 31 33 33 23C33 19 30 18 28 17C29 13 25 12 19 14C20 11 20 8 16 9Z" />
            <ellipse cx="17" cy="23.5" rx="9.5" ry="6" /><circle cx="16" cy="24" r="2.5" />
            <path d="M25 3C33 1 39 8 37 15M27 8C31 8 34 11 33 15" />
          </svg>
          <Fit w={170} size={28} gap={4}>@神算财神哥</Fit>
        </Watermark>
        <Controls>
          <RoundButton><svg {...ctl}><path d="M21 4L4 20L21 36M36 4L19 20L36 36" /></svg></RoundButton>
          <RoundButton><svg {...ctl}><path d="M20 3V37M3 20H37" /></svg></RoundButton>
          <RoundButton><svg {...ctl}><path d="M3 20H37" /></svg></RoundButton>
          <RoundButton><svg {...ctl}><path d="M25 4L8 20L25 36" /></svg></RoundButton>
          <RoundButton><svg {...ctl}><path d="M15 4L32 20L15 36" /></svg></RoundButton>
          <RoundButton><svg {...ctl}><path d="M4 17V3H19M37 21V36H21" /></svg></RoundButton>
        </Controls>
      </ChartWrap>
      <Dates>
        <Fit w={190} size={35} face="Inter" weight={500} color="#646464">07−18 13:30</Fit>
        <Faded><Fit w={150} size={35} face="Inter" weight={500} color="#888">−24 13:30</Fit></Faded>
        <Fit w={191} size={35} face="Inter" weight={500} color="#888" gap={337}>08−05 14:30</Fit>
      </Dates>

      <Panel $h={249}>
        <PanelMain>
          <PanelHead>
            <Picker $w={162}><Fit w={111} size={37}>成交量</Fit><Tri w={17} h={12} d={DOWN} fill="#6b6b6b" /></Picker>
            <Fit w={121} size={37} weight={500} color="#c9393d" gap={14}>量:1386</Fit>
            <Fit w={118} size={37} weight={500} color="#333" gap={18}>M5:692</Fit>
            <Fit w={155} size={37} weight={500} color="#e8774a" gap={15}>M10:3111</Fit>
            <Fit w={121} size={37} weight={500} gap={16}>换手率:</Fit>
            <Fit w={93} size={37} weight={500} color="#47a6d8">0.14%</Fit>
          </PanelHead>
          <VolumeChart />
        </PanelMain>
      </Panel>

      <Panel $h={222}>
        <AiMain>
          <PanelHead>
            <Picker $w={199}><Fit w={147} size={37}>AI牛熊线</Fit><Tri w={17} h={12} d={DOWN} fill="#6b6b6b" /></Picker>
            <Gap $w={14} /><Stars color="#d63c40" />
            <Fit w={148} size={37} gap={7}>趋势上涨</Fit>
            <Gap $w={17} /><Stars color="#129412" />
            <Fit w={148} size={37} gap={7}>趋势下跌</Fit>
          </PanelHead>
          <AiChart />
        </AiMain>
        <AiCard>
          <CardIcon><AssistantIcon /></CardIcon>
          <CardHelp>
            <svg width="39" height="39" viewBox="0 0 39 39" fill="none" stroke="#9b9b9b" strokeWidth="2.8">
              <circle cx="19.5" cy="19.5" r="17.5" />
              <path d="M14 16C14 8.5 25.5 8.5 25.5 15.5C25.5 20 19.8 19.5 19.8 25" /><circle cx="19.8" cy="29" r="0.8" />
            </svg>
          </CardHelp>
          <CardTitle><Fit w={148} size={37}>决策助手</Fit></CardTitle>
          <CardLink>
            <Fit w={186} size={31} color="#6c6c6c">挖潜力上涨股</Fit>
            <Gap $w={13} /><Tri w={11} h={18} d={RIGHT} fill="#5c5c5c" />
          </CardLink>
        </AiCard>
      </Panel>

      <Bottom>
        <Actions>
          <Industry>
            <Tri w={26} h={15} d={UP} fill="#adadad" />
            <IndustryLine $mt={17}><Fit w={63} size={31} color="#8f9398">中药</Fit></IndustryLine>
            <IndustryLine $mt={21}><Fit w={101} size={34} color="#22e022">-1.75%</Fit></IndustryLine>
          </Industry>
          <Action $w={100} $ml={123}>
            <IconSlot>
              <svg width="50" height="56" viewBox="0 0 50 56" fill="none" stroke="#cfcfcf" strokeWidth="2.8">
                <path d="M6 2H43Q48 2 48 7V42L37 53H6Q2 53 2 48V7Q2 2 6 2Z" />
                <path d="M8 16H42M8 23H42M8 30H42M8 37H31" strokeWidth="3" />
              </svg>
            </IconSlot>
            <Fit w={64} size={31}>下单</Fit>
          </Action>
          <Action $w={100} $ml={108}>
            <IconSlot>
              <svg width="58" height="53" viewBox="0 0 58 53" fill="none" stroke="#cfcfcf" strokeWidth="2.8">
                <rect x="2" y="8" width="54" height="40" rx="7" />
                <path d="M18 2.5H40M29 18V37M19 27.5H39" />
                <path d="M10 50.5H20M38 50.5H48" strokeWidth="4" />
              </svg>
            </IconSlot>
            <Fit w={64} size={31}>诊股</Fit>
          </Action>
          <Action $w={100} $ml={108}>
            <IconSlot>
              <svg width="48" height="48" viewBox="0 0 48 48" fill="none" stroke="#cfcfcf" strokeWidth="2.6">
                <rect x="2" y="2" width="44" height="44" /><path d="M24 12V36M12 24H36" />
              </svg>
            </IconSlot>
            <Fit w={98} size={31}>加自选</Fit>
          </Action>
          <Action $w={104} $ml={106}>
            <IconSlot>
              <svg width="52" height="52" viewBox="0 0 52 52" fill="none" stroke="#a5a5a5" strokeWidth="3.4">
                <circle cx="26" cy="26" r="23.5" /><path d="M16 17.5H36M16 26H36M16 34.5H36" strokeWidth="4" strokeLinecap="round" />
              </svg>
            </IconSlot>
            <Badge />
            <Fit w={64} size={31}>功能</Fit>
          </Action>
        </Actions>
        <SystemNav>
          <svg width="37" height="38" viewBox="0 0 37 38" stroke="#b5b5b5" strokeWidth="3.4"><path d="M0 4H37M0 19H37M0 34H37" /></svg>
          <Gap $w={198} />
          <svg width="39" height="39" viewBox="0 0 39 39" fill="none" stroke="#b5b5b5" strokeWidth="3.6"><rect x="2" y="2" width="35" height="35" rx="9" /></svg>
          <Gap $w={206} />
          <svg width="20" height="37" viewBox="0 0 20 37" fill="none" stroke="#b5b5b5" strokeWidth="3"><path d="M18 2L2 18.5L18 35" /></svg>
        </SystemNav>
      </Bottom>
    </Page>
  );
}
